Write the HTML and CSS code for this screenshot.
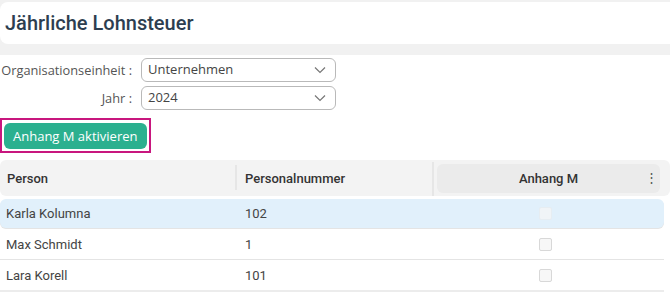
FILE: index.html
```html
<html>
  <head>
    <title>Jährliche Lohnsteuer</title>
    <meta charset="UTF-8" />
    <link rel="stylesheet" href="styles.css">
  </head>
  <body>
    <div class="page-header">
      <h1 class="page-title">Jährliche Lohnsteuer</h1>
    </div>

    <div class="content">
      <div class="filters">
        <label class="filter-label">Organisationseinheit :</label>
        <div class="select">
          <span>Unternehmen</span>
          <svg class="chevron" width="12" height="8" viewBox="0 0 12 8"><path d="M1 1.5 L6 6.5 L11 1.5" fill="none" stroke="#777" stroke-width="1.2"/></svg>
        </div>
        <label class="filter-label">Jahr :</label>
        <div class="select">
          <span>2024</span>
          <svg class="chevron" width="12" height="8" viewBox="0 0 12 8"><path d="M1 1.5 L6 6.5 L11 1.5" fill="none" stroke="#777" stroke-width="1.2"/></svg>
        </div>
      </div>

      <div class="highlight">
        <button class="action-button">Anhang M aktivieren</button>
      </div>

      <div class="grid">
        <div class="grid-head">
          <div class="head-cell col-person">Person</div>
          <div class="head-cell col-nr">Personalnummer</div>
          <div class="head-cell col-anhang active">
            Anhang M
            <span class="menu-dots">&#8942;</span>
          </div>
        </div>
        <div class="grid-row selected">
          <div class="cell col-person">Karla Kolumna</div>
          <div class="cell col-nr">102</div>
          <div class="cell col-anhang"><span class="checkbox"></span></div>
        </div>
        <div class="grid-row">
          <div class="cell col-person">Max Schmidt</div>
          <div class="cell col-nr">1</div>
          <div class="cell col-anhang"><span class="checkbox"></span></div>
        </div>
        <div class="grid-row">
          <div class="cell col-person">Lara Korell</div>
          <div class="cell col-nr">101</div>
          <div class="cell col-anhang"><span class="checkbox"></span></div>
        </div>
      </div>
    </div>
  </body>
</html>
```

FILE: styles.css
```css
body {
  margin: 0;
  background: #f1f1f1;
  font-family: "Open Sans", sans-serif;
  overflow: hidden;
}

.page-header {
  margin-top: 2px;
  margin-right: -10px;
  height: 42px;
  background: #ffffff;
  border-radius: 8px;
  display: flex;
  align-items: center;
  padding-left: 5px;
}

.page-title {
  margin: 0;
  font-family: Roboto, sans-serif;
  font-size: 20px;
  font-weight: 500;
  color: #2d3e50;
}

.content {
  margin-top: 11px;
  background: #ffffff;
  padding-top: 3px;
  height: calc(100vh - 58px);
}

/* Filters */
.filters {
  display: grid;
  grid-template-columns: 132px 195px;
  column-gap: 9px;
  row-gap: 4px;
  align-items: center;
}

.filter-label {
  text-align: right;
  white-space: nowrap;
  font-size: 12.8px;
  color: #555555;
}

.select {
  height: 22px;
  border: 1px solid #b9b9b9;
  border-radius: 6px;
  display: flex;
  align-items: center;
  justify-content: space-between;
  padding: 0 9px 0 6px;
  font-size: 13px;
  color: #444444;
}

.select span {
  margin-top: -3px;
}

/* Button */
.highlight {
  display: inline-block;
  margin-top: 8px;
  border: 2px solid #c8167e;
  padding: 3px 2px 2px 2px;
}

.action-button {
  display: block;
  height: 26px;
  padding: 0 9px;
  border: none;
  border-radius: 6px;
  background: #2bb08f;
  color: #ffffff;
  font-family: "Open Sans", sans-serif;
  font-size: 13px;
}

/* Grid */
.grid {
  margin-top: 7px;
  width: 664px;
  font-family: Roboto, sans-serif;
  font-size: 13px;
  color: #444444;
}

.grid-head {
  display: flex;
  height: 36px;
  background: #f3f3f3;
  border-radius: 6px;
  align-items: center;
  margin-right: -6px;
}

.head-cell {
  font-weight: 500;
  color: #333333;
  height: 100%;
  display: flex;
  align-items: center;
  position: relative;
}

.head-cell.col-nr::before,
.head-cell.col-anhang::before {
  content: "";
  position: absolute;
  left: -2px;
  top: 5px;
  bottom: 6px;
  border-left: 2px solid #e6e6e6;
}

.col-person {
  width: 237px;
  padding-left: 7px;
  box-sizing: border-box;
}

.col-nr {
  width: 200px;
  padding-left: 8px;
  box-sizing: border-box;
}

.col-anhang {
  width: 223px;
  justify-content: center;
  display: flex;
}

.head-cell.col-anhang {
  height: 29px;
  background: #ebebeb;
  border-radius: 6px;
  padding-left: 0;
}

.head-cell.col-anhang::before {
  left: -5px;
  top: -2px;
  bottom: -3px;
}

.menu-dots {
  position: absolute;
  right: 2px;
  top: 6px;
  font-size: 13px;
  color: #555555;
}

.grid-row {
  display: flex;
  align-items: center;
  height: 30px;
  border-bottom: 1px solid #e4e4e4;
}

.grid-row .col-person {
  padding-left: 6px;
}

.grid-row.selected {
  background: #e1f0fb;
  border-radius: 6px;
  margin-top: 3px;
  height: 29px;
  border-bottom: none;
  margin-bottom: 1px;
  box-shadow: 0 1px 0 #e4e4e4;
}

.grid-row:last-child {
  border-bottom: 2px solid #ececec;
}

.cell.col-anhang {
  padding-right: 6px;
  box-sizing: border-box;
}

.checkbox {
  display: inline-block;
  width: 11px;
  height: 11px;
  border: 1px solid #d8d8d8;
  border-radius: 2px;
  background: #f7f7f7;
}

.selected .checkbox {
  border-color: #e6edf2;
  background: #f0f4f7;
}
```
